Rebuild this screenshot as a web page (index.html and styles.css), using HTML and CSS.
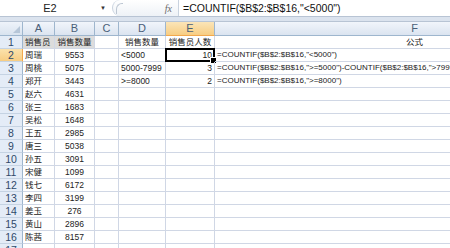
FILE: index.html
```html
<!DOCTYPE html>
<html>
<head>
<meta charset="utf-8">
<link rel="stylesheet" href="styles.css">
</head>
<body>
<div class="fbar">
  <div class="namebox">E2</div>
  <div class="dd">&#9660;</div>
  <div class="pill"><span class="grip"></span><span class="fx">fx</span></div>
  <div class="input">=COUNTIF($B$2:$B$16,"&lt;5000")</div>
</div>
<div class="band"></div>
<div class="sheet">
  <div class="corner"><span class="tri"></span></div>
  <div class="ch">A</div><div class="ch">B</div><div class="ch">C</div><div class="ch">D</div><div class="ch sel">E</div><div class="ch">F</div>

  <div class="rh">1</div><div class="c l fill">销售员</div><div class="c m fill">销售数量</div><div class="c"></div><div class="c m">销售数量</div><div class="c m">销售员人数</div><div class="c m">公式</div>
  <div class="rh sel">2</div><div class="c l">周瑞</div><div class="c m">9553</div><div class="c"></div><div class="c l">&lt;5000</div><div class="c r active">10<span class="handle"></span></div><div class="c l f">=COUNTIF($B$2:$B$16,"&lt;5000")</div>
  <div class="rh">3</div><div class="c l">周桃</div><div class="c m">5075</div><div class="c"></div><div class="c l">5000-7999</div><div class="c r">3</div><div class="c l f">=COUNTIF($B$2:$B$16,"&gt;=5000")-COUNTIF($B$2:$B$16,"&gt;7999")</div>
  <div class="rh">4</div><div class="c l">郑开</div><div class="c m">3443</div><div class="c"></div><div class="c l">&gt;=8000</div><div class="c r">2</div><div class="c l f">=COUNTIF($B$2:$B$16,"&gt;=8000")</div>
  <div class="rh">5</div><div class="c l">赵六</div><div class="c m">4631</div><div class="c"></div><div class="c"></div><div class="c"></div><div class="c"></div>
  <div class="rh">6</div><div class="c l">张三</div><div class="c m">1683</div><div class="c"></div><div class="c"></div><div class="c"></div><div class="c"></div>
  <div class="rh">7</div><div class="c l">吴松</div><div class="c m">1648</div><div class="c"></div><div class="c"></div><div class="c"></div><div class="c"></div>
  <div class="rh">8</div><div class="c l">王五</div><div class="c m">2985</div><div class="c"></div><div class="c"></div><div class="c"></div><div class="c"></div>
  <div class="rh">9</div><div class="c l">唐三</div><div class="c m">5038</div><div class="c"></div><div class="c"></div><div class="c"></div><div class="c"></div>
  <div class="rh">10</div><div class="c l">孙五</div><div class="c m">3091</div><div class="c"></div><div class="c"></div><div class="c"></div><div class="c"></div>
  <div class="rh">11</div><div class="c l">宋健</div><div class="c m">1099</div><div class="c"></div><div class="c"></div><div class="c"></div><div class="c"></div>
  <div class="rh">12</div><div class="c l">钱七</div><div class="c m">6172</div><div class="c"></div><div class="c"></div><div class="c"></div><div class="c"></div>
  <div class="rh">13</div><div class="c l">李四</div><div class="c m">3199</div><div class="c"></div><div class="c"></div><div class="c"></div><div class="c"></div>
  <div class="rh">14</div><div class="c l">姜玉</div><div class="c m">276</div><div class="c"></div><div class="c"></div><div class="c"></div><div class="c"></div>
  <div class="rh">15</div><div class="c l">黄山</div><div class="c m">2896</div><div class="c"></div><div class="c"></div><div class="c"></div><div class="c"></div>
  <div class="rh">16</div><div class="c l">陈茜</div><div class="c m">8157</div><div class="c"></div><div class="c"></div><div class="c"></div><div class="c"></div>
  <div class="rh">17</div><div class="c"></div><div class="c"></div><div class="c"></div><div class="c"></div><div class="c"></div><div class="c"></div>
</div>
</body>
</html>
```

FILE: styles.css
```css
html, body {
  margin: 0;
  padding: 0;
  width: 450px;
  height: 248px;
  overflow: hidden;
  background: #fff;
  font-family: "Liberation Sans", "Noto Sans CJK SC", sans-serif;
}
.fbar {
  display: flex;
  height: 17px;
  background: #fff;
  border-bottom: 1px solid #b8c4d4;
  box-sizing: border-box;
}
.namebox {
  width: 100px;
  font-size: 11px;
  line-height: 16px;
  text-align: center;
  color: #222;
}
.dd {
  width: 12px;
  font-size: 6px;
  line-height: 16px;
  color: #333;
  text-align: left;
}
.pill {
  width: 66px;
  display: flex;
  justify-content: space-between;
  align-items: center;
  background: linear-gradient(#fff, #eef2f7);
  border-left: 1px solid #c9d3df;
  border-radius: 8px 0 0 8px;
  box-sizing: border-box;
  padding-right: 6px;
}
.grip {
  width: 6px;
  height: 10px;
  margin-left: 3px;
  border-left: 1px solid #bcc6d2;
  border-top: 1px solid #bcc6d2;
  border-radius: 6px 0 0 0;
}
.fx {
  font-family: "Liberation Serif", serif;
  font-style: italic;
  font-size: 10px;
  color: #6a6a6a;
}
.input {
  flex: 1;
  border-left: 1px solid #c9d3df;
  padding-left: 4px;
  font-size: 10.5px;
  line-height: 16px;
  color: #111;
  white-space: nowrap;
}
.band {
  height: 4px;
  background: #dbe3ee;
  border-bottom: 1px solid #b8c4d4;
}
.sheet {
  display: grid;
  grid-template-columns: 23px 32px 40px 24px 47px 49px 400px;
  grid-template-rows: 14px;
  grid-auto-rows: 13px;
  font-size: 8.5px;
  color: #222;
}
.corner {
  background: linear-gradient(#eef3fa, #d9e3ef);
  border-right: 1px solid #9eb6ce;
  border-bottom: 1px solid #9eb6ce;
  box-sizing: border-box;
  position: relative;
}
.tri {
  position: absolute;
  right: 2px;
  bottom: 2px;
  width: 0;
  height: 0;
  border-left: 7px solid transparent;
  border-bottom: 7px solid #b6c6d8;
}
.ch {
  background: linear-gradient(#f1f5fb, #dbe4f0);
  border-right: 1px solid #9eb6ce;
  border-bottom: 1px solid #9eb6ce;
  box-sizing: border-box;
  text-align: center;
  font-size: 11px;
  line-height: 13px;
  color: #4a5f78;
}
.ch.sel {
  background: linear-gradient(#fbe5b8, #f7cd83);
  border-bottom-color: #f2a94e;
  color: #4a5f78;
}
.rh {
  background: #e4ecf7;
  border-right: 1px solid #9eb6ce;
  border-bottom: 1px solid #c5d3e3;
  box-sizing: border-box;
  text-align: center;
  font-size: 10.5px;
  line-height: 12px;
  color: #2f4a6a;
}
.rh.sel {
  background: linear-gradient(#fbe2ac, #f7cd83);
  border-right-color: #f2a94e;
}
.c {
  border-right: 1px solid #d0d7e5;
  border-bottom: 1px solid #d0d7e5;
  box-sizing: border-box;
  line-height: 12px;
  white-space: nowrap;
  padding: 0 2px;
  position: relative;
}
.l { text-align: left; }
.m { text-align: center; }
.r { text-align: right; }
.fill { background: #dcdcdc; }
.f { overflow: visible; font-size: 8px; }
.active {
  border: 2px solid #000;
  margin: -1px 0 0 -1px;
  line-height: 10px;
  padding-right: 1px;
}
.handle {
  position: absolute;
  right: -4px;
  bottom: -4px;
  width: 5px;
  height: 5px;
  background: #000;
  border: 1px solid #fff;
}
```
